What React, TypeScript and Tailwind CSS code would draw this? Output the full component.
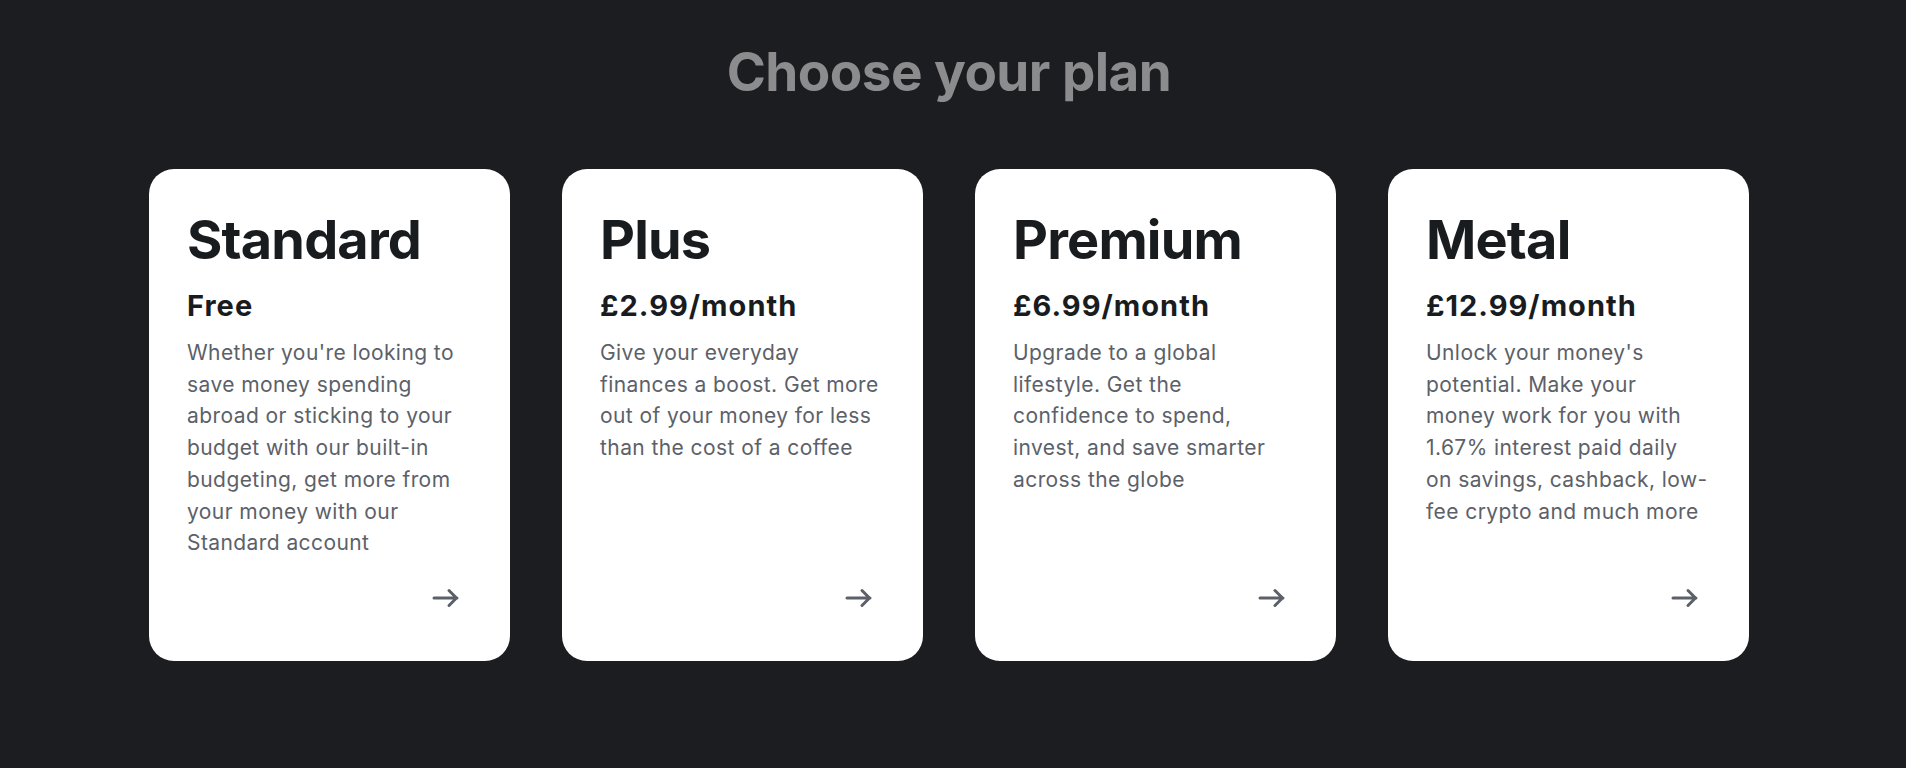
import React from "react";

const plans = [
  {
    name: "Standard",
    price: "Free",
    description:
      "Whether you're looking to save money spending abroad or sticking to your budget with our built-in budgeting, get more from your money with our Standard account",
  },
  {
    name: "Plus",
    price: "£2.99/month",
    description:
      "Give your everyday finances a boost. Get more out of your money for less than the cost of a coffee",
  },
  {
    name: "Premium",
    price: "£6.99/month",
    description:
      "Upgrade to a global lifestyle. Get the confidence to spend, invest, and save smarter across the globe",
  },
  {
    name: "Metal",
    price: "£12.99/month",
    description:
      "Unlock your money's potential. Make your money work for you with 1.67% interest paid daily on savings, cashback, low-fee crypto and much more",
  },
];

const Arrow = () => (
  <svg width="28" height="20" viewBox="0 0 28 20" fill="none" aria-hidden="true">
    <path
      d="M2 10H25M17 2.5L24.5 10L17 17.5"
      stroke="#5b6069"
      strokeWidth="3"
      strokeLinecap="round"
      strokeLinejoin="round"
    />
  </svg>
);

const App = () => {
  return (
    <div className="min-h-[768px] w-full bg-[#1c1d21] font-['Inter','Liberation_Sans',sans-serif]">
      <div className="w-[1898px] flex flex-col items-center">
        <h1 className="pt-[46px] text-[53px] leading-none font-bold tracking-[-0.01em] text-[#8c8c8f]">
          Choose your plan
        </h1>

        <div className="mt-[70px] flex gap-[52px]">
          {plans.map((plan) => (
            <div
              key={plan.name}
              className="w-[361px] h-[492px] rounded-[25px] bg-white flex flex-col"
            >
              <div className="pl-[38px] pr-[41px] pt-[44px]">
                <h2 className="text-[54px] leading-none font-bold tracking-[-0.015em] text-[#191c1f]">
                  {plan.name}
                </h2>
                <p className="mt-[24px] text-[29px] leading-none font-bold tracking-[0.035em] text-[#191c1f]">
                  {plan.price}
                </p>
                <p className="mt-[17px] text-[21px] leading-[31.7px] tracking-[0.02em] text-[#5c6169]">
                  {plan.description}
                </p>
              </div>
              <div className="mt-auto flex justify-end pr-[50px] pb-[53px]">
                <Arrow />
              </div>
            </div>
          ))}
        </div>
      </div>
    </div>
  );
};

export default App;
